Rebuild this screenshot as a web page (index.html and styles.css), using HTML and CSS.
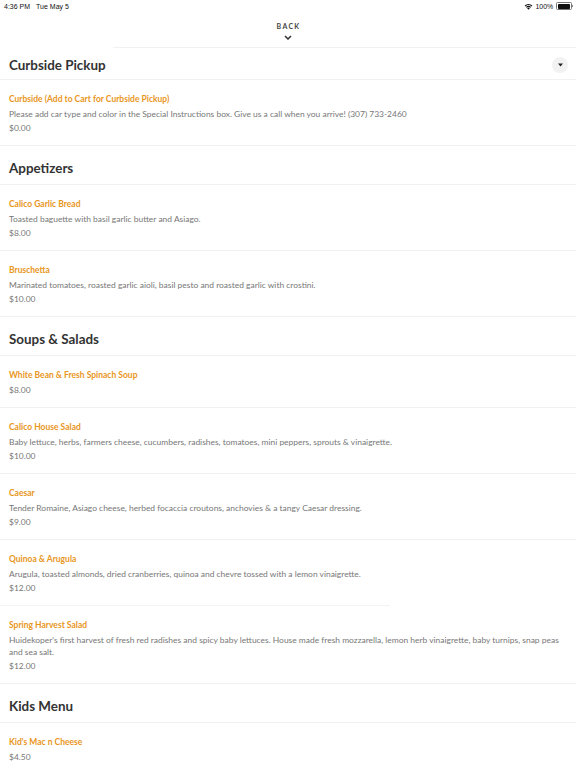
FILE: index.html
```
<!DOCTYPE html>
<html>
<head>
<meta charset="utf-8">
<link rel="stylesheet" href="styles.css">
</head>
<body>
<div class="statusbar">
  <div class="sb-left"><span>4:36 PM</span><span class="sb-date">Tue May 5</span></div>
  <div class="sb-right">
    <svg class="wifi" width="9" height="7" viewBox="0 0 18 14"><path d="M9 13.5 L6.2 10.4 A4 4 0 0 1 11.8 10.4 Z" fill="#111"/><path d="M3.9 8 A7.4 7.4 0 0 1 14.1 8 L12.6 9.6 A5.3 5.3 0 0 0 5.4 9.6 Z" fill="#111"/><path d="M1.3 5.2 A11.2 11.2 0 0 1 16.7 5.2 L15.2 6.8 A9 9 0 0 0 2.8 6.8 Z" fill="#111"/></svg>
    <span class="sb-pct">100%</span>
    <span class="battery"><span class="bat-body"><span class="bat-fill"></span></span><span class="bat-tip"></span></span>
  </div>
</div>
<div class="nav">
  <div class="back">BACK</div>
  <svg class="chev" width="8" height="5" viewBox="0 0 8 5"><path d="M1 1 L4 4 L7 1" fill="none" stroke="#333" stroke-width="1.5"/></svg>
  <div class="nav-line"></div>
</div>

<div class="section-head first">
  <h2>Curbside Pickup</h2>
  <span class="dd"><svg width="5" height="4" viewBox="0 0 5 4"><path d="M0 0.5 H5 L2.5 3.5 Z" fill="#222"/></svg></span>
</div>
<div class="item">
  <div class="name">Curbside (Add to Cart for Curbside Pickup)</div>
  <div class="desc">Please add car type and color in the Special Instructions box. Give us a call when you arrive! (307) 733-2460</div>
  <div class="price">$0.00</div>
</div>

<div class="section-head">
  <h2>Appetizers</h2>
</div>
<div class="item">
  <div class="name">Calico Garlic Bread</div>
  <div class="desc">Toasted baguette with basil garlic butter and Asiago.</div>
  <div class="price">$8.00</div>
</div>
<div class="item">
  <div class="name">Bruschetta</div>
  <div class="desc">Marinated tomatoes, roasted garlic aioli, basil pesto and roasted garlic with crostini.</div>
  <div class="price">$10.00</div>
</div>

<div class="section-head">
  <h2>Soups &amp; Salads</h2>
</div>
<div class="item">
  <div class="name">White Bean &amp; Fresh Spinach Soup</div>
  <div class="price">$8.00</div>
</div>
<div class="item">
  <div class="name">Calico House Salad</div>
  <div class="desc">Baby lettuce, herbs, farmers cheese, cucumbers, radishes, tomatoes, mini peppers, sprouts &amp; vinaigrette.</div>
  <div class="price">$10.00</div>
</div>
<div class="item">
  <div class="name">Caesar</div>
  <div class="desc">Tender Romaine, Asiago cheese, herbed focaccia croutons, anchovies &amp; a tangy Caesar dressing.</div>
  <div class="price">$9.00</div>
</div>
<div class="item partial">
  <div class="name">Quinoa &amp; Arugula</div>
  <div class="desc">Arugula, toasted almonds, dried cranberries, quinoa and chevre tossed with a lemon vinaigrette.</div>
  <div class="price">$12.00</div>
</div>
<div class="item">
  <div class="name">Spring Harvest Salad</div>
  <div class="desc">Huidekoper's first harvest of fresh red radishes and spicy baby lettuces. House made fresh mozzarella, lemon herb vinaigrette, baby turnips, snap peas and sea salt.</div>
  <div class="price">$12.00</div>
</div>

<div class="section-head">
  <h2>Kids Menu</h2>
</div>
<div class="item">
  <div class="name">Kid's Mac n Cheese</div>
  <div class="price">$4.50</div>
</div>
</body>
</html>
```
FILE: styles.css
```
html, body {
  margin: 0;
  padding: 0;
  background: #fff;
  font-family: Lato, "Open Sans", sans-serif;
  width: 576px;
  overflow: hidden;
}
.statusbar {
  height: 12px;
  display: flex;
  justify-content: space-between;
  align-items: center;
  padding: 0 3px 0 4px;
  font-family: "Liberation Sans", Arial, sans-serif;
  font-size: 7px;
  color: #111;
}
.sb-left { display: flex; gap: 6px; }
.sb-right { display: flex; align-items: center; gap: 2px; }
.battery { display: flex; align-items: center; margin-left: 1px; }
.bat-body {
  width: 12px;
  height: 5px;
  border: 0.6px solid #777;
  border-radius: 1.5px;
  padding: 0.6px;
  display: flex;
}
.bat-fill { flex: 1; background: #111; border-radius: 0.8px; }
.bat-tip { width: 1px; height: 2px; background: #888; margin-left: 0.5px; }
.nav {
  height: 36px;
  display: flex;
  flex-direction: column;
  align-items: center;
}
.back {
  margin-top: 9px;
  font-size: 7px;
  line-height: 10px;
  font-weight: 700;
  letter-spacing: 1.3px;
  color: #444;
  padding-left: 1px;
}
.chev { margin-top: 4px; }
.nav-line {
  margin-top: auto;
  align-self: stretch;
  margin-left: 113px;
  height: 1px;
  background: #f1f1f1;
}
.section-head {
  display: flex;
  align-items: center;
  justify-content: space-between;
  padding: 14px 9px 8px;
  border-bottom: 1px solid #f1f1f1;
}
.section-head.first { padding-top: 9px; padding-bottom: 6px; }
.section-head h2 {
  margin: 0;
  font-size: 13.4px;
  line-height: 16px;
  font-weight: 700;
  color: #333;
}
.dd {
  width: 16px;
  height: 16px;
  border-radius: 50%;
  background: #f2f2f2;
  display: flex;
  align-items: center;
  justify-content: center;
  margin-right: -1px;
}
.item {
  padding: 12px 9px 11px;
  border-bottom: 1px solid #f1f1f1;
}
.item.partial {
  border-bottom: none;
  background: linear-gradient(#f3f3f3, #f3f3f3) left bottom / 390px 1px no-repeat;
  padding-bottom: 12px;
}
.name {
  font-size: 8.5px;
  line-height: 14px;
  font-weight: 700;
  color: #e8961c;
}
.desc {
  margin-top: 2px;
  font-size: 8.45px;
  line-height: 12px;
  color: #777;
}
.price {
  margin-top: 2px;
  font-size: 8.45px;
  line-height: 12px;
  color: #777;
}
```
